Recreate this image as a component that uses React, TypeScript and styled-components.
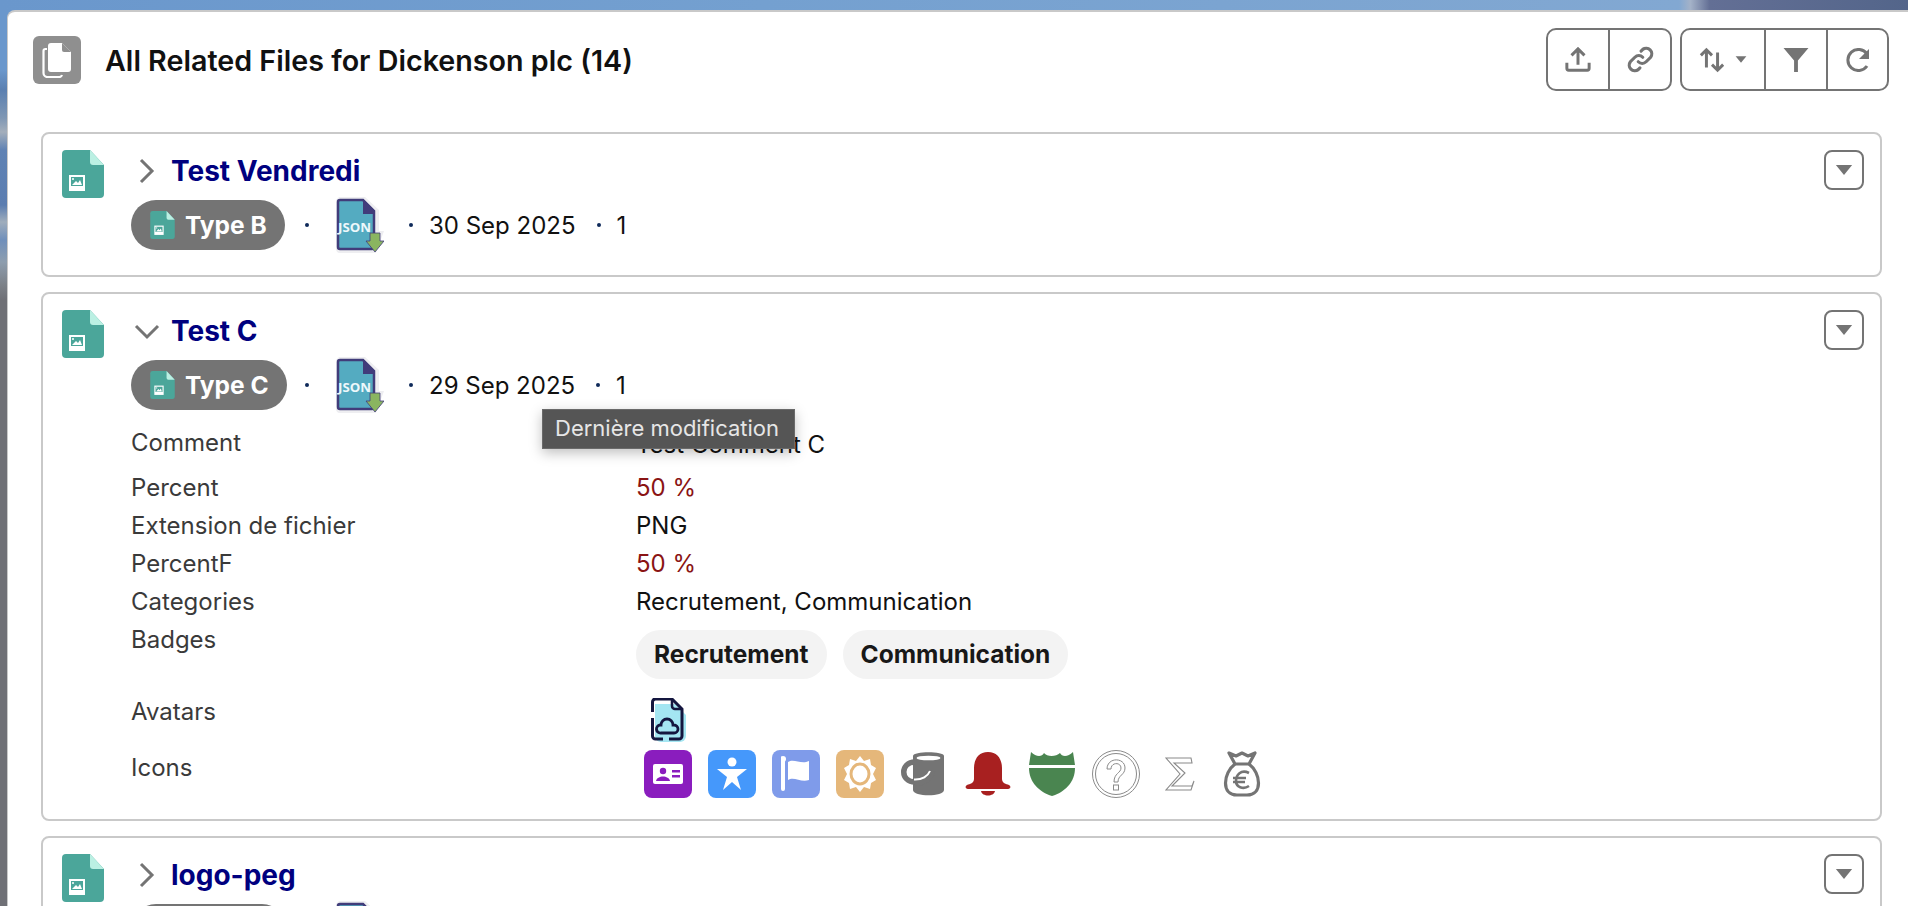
import React from "react";
import styled, { createGlobalStyle } from "styled-components";

const Global = createGlobalStyle`
  html, body { margin: 0; padding: 0; height: 100%; overflow: hidden; }
  body {
    font-family: Inter, "Liberation Sans", sans-serif;
    background:
      linear-gradient(90deg, #6a97cc 0%, #74a0d0 40%, #82a8d2 88%, #a4b2c8 88.6%, #636f95 89.6%, #53658a 100%) top / 100% 12px no-repeat,
      linear-gradient(180deg, #6a97cc 0, #6a97cc 70px, #5a7fb0 90px, #7f97b4 118px, #a3aebb 132px, #5f82b4 150px, #5b7db0 205px, #9fadbc 222px, #6f8fbb 240px, #8d9dae 262px, #7c8188 285px, #6f7076 300px, #6f7076 906px);
  }
`;

const Page = styled.div`
  height: 906px;
  padding: 10px 0 0 7px;
  box-sizing: border-box;
  overflow: hidden;
`;

const Panel = styled.main`
  height: 896px;
  box-sizing: border-box;
  background: #fff;
  border-top: 2px solid #c9c9c9;
  border-left: 1px solid #c9c9c9;
  border-top-left-radius: 8px;
  padding: 16px 19px 0 25px;
  overflow: hidden;
`;

const Header = styled.header`
  display: flex;
  align-items: center;
  justify-content: space-between;
  height: 63px;
  margin-bottom: 41px;
`;

const TitleWrap = styled.div`
  display: flex;
  align-items: center;
  gap: 24px;
`;

const HeaderIcon = styled.div`
  width: 48px;
  height: 48px;
  border-radius: 6px;
  background: #8f8f8f;
  display: flex;
  align-items: center;
  justify-content: center;
`;

const PageTitle = styled.h1`
  margin: 2px 0 0;
  font-size: 28.7px;
  font-weight: 600;
  color: #111;
  white-space: nowrap;
`;

const Toolbar = styled.div`
  display: flex;
  gap: 8px;
`;

const BtnGroup = styled.div`
  display: flex;
  height: 63px;
  box-sizing: border-box;
  border: 2px solid #747474;
  border-radius: 10px;
  background: #fff;
`;

const ToolBtn = styled.div<{ $w: number }>`
  width: ${(p) => p.$w}px;
  box-sizing: border-box;
  display: flex;
  align-items: center;
  justify-content: center;
  gap: 10px;
  & + & { border-left: 2px solid #747474; }
`;

const Card = styled.section`
  box-sizing: border-box;
  position: relative;
  width: 1841px;
  margin-left: 8px;
  border: 2px solid #c9c9c9;
  border-radius: 8px;
  padding: 16px 16px 22px 19px;
  margin-bottom: 15px;
  display: flex;
  gap: 27px;
`;

const CardBody = styled.div`
  flex: 1;
  min-width: 0;
`;

const TitleRow = styled.div`
  display: flex;
  align-items: center;
  height: 41px;
  padding-bottom: 6px;
  gap: 17px;
  padding-left: 9px;
`;

const CardTitle = styled.h2`
  margin: 0;
  font-size: 28px;
  font-weight: 700;
  color: #00007f;
  white-space: nowrap;
`;

const MenuBtn = styled.div`
  width: 40px;
  height: 40px;
  box-sizing: border-box;
  border: 2px solid #747474;
  border-radius: 8px;
  display: flex;
  align-items: center;
  justify-content: center;
`;

const MetaRow = styled.div`
  display: flex;
  align-items: center;
  height: 56px;
  font-size: 24px;
  color: #111;
`;

const PillSlot = styled.div`
  width: 155px;
  flex: none;
`;

const Pill = styled.div`
  display: inline-flex;
  height: 50px;
  box-sizing: border-box;
  border-radius: 25px;
  background: #747474;
  color: #fff;
  font-weight: 700;
  font-size: 24.5px;
  align-items: center;
  gap: 10px;
  padding: 0 18px 0 19px;
  white-space: nowrap;
  vertical-align: top;
`;

const Dot = styled.span<{ $ml: number; $mr: number }>`
  width: 4px;
  height: 4px;
  border-radius: 50%;
  background: #0f2a5a;
  margin: 0 ${(p) => p.$mr}px 0 ${(p) => p.$ml}px;
  flex: none;
`;

const Details = styled.div`
  margin: 14px 0 -1px;
  display: grid;
  grid-template-columns: 505px 1fr;
  font-size: 24px;
`;

const Label = styled.div<{ $h?: number }>`
  color: #3a3a3a;
  height: ${(p) => p.$h ?? 38}px;
  line-height: 32px;
`;

const Value = styled.div<{ $red?: boolean; $pt?: number }>`
  color: ${(p) => (p.$red ? "#8a1414" : "#111")};
  padding-top: ${(p) => p.$pt ?? 0}px;
  line-height: 32px;
`;

const Badges = styled.div`
  display: flex;
  gap: 16px;
  padding-top: 6px;
`;

const Badge = styled.span`
  height: 49px;
  border-radius: 25px;
  background: #f3f3f3;
  color: #181818;
  font-weight: 700;
  font-size: 24.5px;
  line-height: 49px;
  padding: 0 18px;
  white-space: nowrap;
`;

const IconRow = styled.div`
  display: flex;
  gap: 16px;
  margin: -2px 0 0 8px;
`;

const IconCell = styled.div<{ $bg?: string; $start?: boolean }>`
  width: 48px;
  height: 48px;
  border-radius: 8px;
  background: ${(p) => p.$bg ?? "transparent"};
  display: flex;
  align-items: center;
  justify-content: ${(p) => (p.$start ? "flex-start" : "center")};
  padding-left: ${(p) => (p.$start ? "3px" : "0")};
  box-sizing: border-box;
`;

const AvatarCell = styled.div`
  margin-left: 15px;
  padding-top: 2px;
  height: 43px;
`;

const Tooltip = styled.div`
  position: absolute;
  left: 499px;
  top: 115px;
  width: 253px;
  height: 40px;
  box-sizing: border-box;
  background: #555;
  border: 1px solid #6a6a6a;
  color: #e6e6e6;
  font-size: 22px;
  line-height: 37px;
  padding-left: 12px;
  white-space: nowrap;
  box-shadow: 0 4px 12px rgba(0,0,0,.25);
`;

const ChevronSvg = styled.svg`
  flex: none;
  margin: 0 -6px;
`;

const Chevron = ({ open }: { open?: boolean }) => (
  <ChevronSvg width="26" height="26" viewBox="0 0 26 26" fill="none" stroke="#747474" strokeWidth="3">
    {open ? <path d="M2 8 L13 19 L24 8" /> : <path d="M7 2 L18 13 L7 24" />}
  </ChevronSvg>
);

const FileImg = ({ w = 42, h = 48 }: { w?: number; h?: number }) => (
  <svg width={w} height={h} viewBox="0 0 42 48" style={{ flex: "none" }}>
    <path d="M4 0 H28 L42 15 V44 a4 4 0 0 1 -4 4 H4 a4 4 0 0 1 -4 -4 V4 a4 4 0 0 1 4 -4 Z" fill="#4ba69a" />
    <path d="M28 0 L42 15 H31 a3 3 0 0 1 -3 -3 Z" fill="#bbf0e3" />
    <rect x="7" y="25" width="16" height="16" fill="#fff" />
    <rect x="9" y="27" width="12" height="9" fill="#4ba69a" />
    <path d="M10 35 L14 31 L16 33 L18 30 L20 35 Z" fill="#fff" />
    <circle cx="11" cy="29" r="1" fill="#fff" />
  </svg>
);

const JsonIcon = () => (
  <svg width="48" height="56" viewBox="0 0 48 56" style={{ flex: "none" }}>
    <path d="M3 0 H29 L43 13 V34 H48 L40 56 H5 a4 4 0 0 1 -5 -4 V3 Z" fill="#eeeef1" />
    <path d="M2 50 V5 a2 2 0 0 1 2 -2 H27 L38 14 V50 a2 2 0 0 1 -2 2 H4 a2 2 0 0 1 -2 -2 Z" fill="#54abc1" stroke="#413c7a" strokeWidth="2.5" />
    <path d="M27 3 L38 14 V17 H27 Z" fill="#413c7a" />
    <text x="18.5" y="35" textAnchor="middle" fontFamily="'Open Sans', Inter, sans-serif" fontSize="13" fontWeight="700" fill="#eef8fb" textLength="33" lengthAdjust="spacingAndGlyphs">JSON</text>
    <path d="M34 36 H44 V44 H48 L39 55 L30 44 H34 Z" fill="#8ab560" stroke="#413c7a" strokeWidth="0.8" />
  </svg>
);

const Caret = ({ w = 20, h = 11 }: { w?: number; h?: number }) => (
  <svg width={w} height={h} viewBox="0 0 20 11"><path d="M1 0 H19 L10 11 Z" fill="#747474" /></svg>
);

const MetaLine = ({ type, date }: { type: string; date: string }) => (
  <MetaRow>
    <PillSlot><Pill><FileImg w={25} h={28} />{type}</Pill></PillSlot>
    <Dot $ml={19} $mr={27} />
    <JsonIcon />
    <Dot $ml={25} $mr={16} />
    <span>{date}</span>
    <Dot $ml={21} $mr={16} />
    <span>1</span>
  </MetaRow>
);

const CardShell = ({ title, open, children }: { title: string; open?: boolean; children: React.ReactNode }) => (
  <Card>
    <FileImg />
    <CardBody>
      <TitleRow>
        <Chevron open={open} />
        <CardTitle>{title}</CardTitle>
      </TitleRow>
      {children}
    </CardBody>
    <MenuBtn><Caret w={18} h={10} /></MenuBtn>
  </Card>
);

export default function App() {
  return (
    <Page>
      <Global />
      <Panel>
        <Header>
          <TitleWrap>
            <HeaderIcon>
              <svg width="30" height="36" viewBox="0 0 30 36" fill="none">
                <path d="M5 7 H3.5 a2 2 0 0 0 -2 2 V31 a4 4 0 0 0 4 4 H17 a3 3 0 0 0 3 -2" stroke="#fff" strokeWidth="2.2" />
                <path d="M9 1 H20 L29 10 V27 a3 3 0 0 1 -3 3 H9 a3 3 0 0 1 -3 -3 V4 a3 3 0 0 1 3 -3 Z" fill="#fff" />
                <path d="M20 1 V8 a2 2 0 0 0 2 2 H29 Z" fill="#8f8f8f" />
              </svg>
            </HeaderIcon>
            <PageTitle>All Related Files for Dickenson plc (14)</PageTitle>
          </TitleWrap>
          <Toolbar>
            <BtnGroup>
              <ToolBtn $w={60}>
                <svg width="26" height="26" viewBox="0 0 28 28" fill="none" stroke="#747474" strokeWidth="3.2">
                  <path d="M2 17 V23 a2 2 0 0 0 2 2 H24 a2 2 0 0 0 2 -2 V17" />
                  <path d="M14 19 V3 M7 9 L14 2 L21 9" />
                </svg>
              </ToolBtn>
              <ToolBtn $w={62}>
                <svg width="27" height="27" viewBox="0 0 24 24" fill="none" stroke="#747474" strokeWidth="2.8" strokeLinecap="round">
                  <path d="M10 14 a5 5 0 0 0 7 0 l4 -4 a5 5 0 0 0 -7 -7 l-1.5 1.5" />
                  <path d="M14 10 a5 5 0 0 0 -7 0 l-4 4 a5 5 0 0 0 7 7 l1.5 -1.5" />
                </svg>
              </ToolBtn>
            </BtnGroup>
            <BtnGroup>
              <ToolBtn $w={82}>
                <svg width="26" height="26" viewBox="0 0 28 26" fill="none" stroke="#747474" strokeWidth="3.2">
                  <path d="M8 21 V2 M2 8 L8 2 L14 8" />
                  <path d="M20 5 V24 M14 18 L20 24 L26 18" />
                </svg>
                <Caret w={12} h={7} />
              </ToolBtn>
              <ToolBtn $w={62}>
                <svg width="26" height="24" viewBox="0 0 26 25"><path d="M0 0 H26 L15 13 V25 H11 V13 Z" fill="#747474" /></svg>
              </ToolBtn>
              <ToolBtn $w={61}>
                <svg width="24" height="24" viewBox="0 0 24 24" fill="none" stroke="#747474" strokeWidth="3">
                  <path d="M21 6 A10.5 10.5 0 1 0 21 18" />
                  <path d="M23 1 V11 H13 Z" fill="#747474" stroke="none" />
                </svg>
              </ToolBtn>
            </BtnGroup>
          </Toolbar>
        </Header>

        <CardShell title="Test Vendredi">
          <MetaLine type="Type B" date="30 Sep 2025" />
        </CardShell>

        <CardShell title="Test C" open>
          <MetaLine type="Type C" date="29 Sep 2025" />
          <Details>
            <Label $h={45}>Comment</Label><Value $pt={2}>Test Comment C</Value>
            <Label>Percent</Label><Value $red>50 %</Value>
            <Label>Extension de fichier</Label><Value>PNG</Value>
            <Label>PercentF</Label><Value $red>50 %</Value>
            <Label>Categories</Label><Value>Recrutement, Communication</Value>
            <Label $h={72}>Badges</Label>
            <Badges><Badge>Recrutement</Badge><Badge>Communication</Badge></Badges>
            <Label $h={56}>Avatars</Label>
            <AvatarCell>
              <svg width="36" height="44" viewBox="0 0 36 44" fill="none">
                <path d="M4 6 H24 L35 17 V38 a6 6 0 0 1 -6 6 H10 a6 6 0 0 1 -6 -6 Z" fill="#a4e6f2" />
                <path d="M1.5 14 V4 a3 3 0 0 1 3 -3 H21 L31 11 V38 a3 3 0 0 1 -3 3 H18 M12 41 H4.5 a3 3 0 0 1 -3 -3 V20" stroke="#14163f" strokeWidth="3" />
                <path d="M21 1 V8 a3 3 0 0 0 3 3 H31" stroke="#14163f" strokeWidth="2.5" />
                <path d="M10 35 a4 4 0 0 1 -1 -8 H10 a6 6 0 0 1 12 0 H23 a4 4 0 0 1 0 8 Z" stroke="#14163f" strokeWidth="2.8" />
              </svg>
            </AvatarCell>
            <Label $h={46}>Icons</Label>
            <IconRow>
              <IconCell $bg="#8a1dbe">
                <svg width="30" height="20" viewBox="0 0 30 20">
                  <rect width="30" height="20" rx="2" fill="#fff" />
                  <circle cx="10" cy="7" r="3.2" fill="#8a1dbe" />
                  <path d="M3 17 C4 11 16 11 17 17 Z" fill="#8a1dbe" />
                  <rect x="19" y="6" width="8" height="2.5" fill="#8a1dbe" /><rect x="19" y="11" width="8" height="2.5" fill="#8a1dbe" />
                </svg>
              </IconCell>
              <IconCell $bg="#4598fb">
                <svg width="30" height="34" viewBox="0 0 30 34" fill="#fff">
                  <circle cx="15" cy="5" r="4.5" />
                  <path d="M0 12 L30 12 L20 20 L24 33 L15 25 L6 33 L10 20 Z" />
                </svg>
              </IconCell>
              <IconCell $bg="#7f9bea">
                <svg width="30" height="36" viewBox="0 0 30 36" fill="#fff">
                  <rect x="0" y="1" width="4" height="34" rx="2" /><circle cx="2" cy="3" r="3" />
                  <path d="M7 6 C13 2 20 9 28 5 V24 C20 27 13 20 7 24 Z" />
                </svg>
              </IconCell>
              <IconCell $bg="#e5b77a">
                <svg width="32" height="36" viewBox="0 0 32 36">
                  <path d="M16 0 L20 5 L26 3 L27 9 L32 12 L29 18 L32 24 L27 27 L26 33 L20 31 L16 36 L12 31 L6 33 L5 27 L0 24 L3 18 L0 12 L5 9 L6 3 L12 5 Z" fill="#fff" />
                  <ellipse cx="16" cy="18" rx="9" ry="10" fill="none" stroke="#e5b77a" strokeWidth="3" />
                </svg>
              </IconCell>
              <IconCell>
                <svg width="46" height="44" viewBox="0 0 46 44" fill="none">
                  <path d="M12 4 C12 -1 43 -1 43 4 V38 C43 45 12 45 12 38 Z" fill="#747474" />
                  <ellipse cx="27.5" cy="6" rx="12" ry="2.3" fill="#fff" />
                  <path d="M14 10 C-1 10 -1 30 14 30" stroke="#747474" strokeWidth="5.5" />
                  <path d="M14 31 C22 32 30 27 32 19" stroke="#747474" strokeWidth="5" />
                  <path d="M13 27.5 C21 28 27 24 29 19" stroke="#fff" strokeWidth="2" />
                </svg>
              </IconCell>
              <IconCell>
                <svg width="46" height="44" viewBox="0 0 46 44" fill="#a82020">
                  <path d="M23 0 C33 0 37 8 37 16 V27 C37 31 41 32 44 33 C46 34 46 37 43 37 H3 C0 37 0 34 2 33 C5 32 9 31 9 27 V16 C9 8 13 0 23 0 Z" />
                  <path d="M16 39 H30 C29 45 17 45 16 39 Z" />
                </svg>
              </IconCell>
              <IconCell>
                <svg width="46" height="44" viewBox="0 0 46 44" fill="#4a8550">
                  <path d="M2 0 C7 5 13 5 15 1 C18 5 27 5 31 1 C33 5 39 5 44 0 L46 13 H0 Z" />
                  <path d="M0 16 H46 C46 30 36 40 23 44 C10 40 0 30 0 16 Z" />
                </svg>
              </IconCell>
              <IconCell>
                <svg width="48" height="48" viewBox="0 0 48 48" fill="none" stroke="#8a8a8a" strokeWidth="1">
                  <circle cx="24" cy="24" r="23.5" /><circle cx="24" cy="24" r="20.5" />
                  <path d="M15 19 C15 7 33 7 33 18 C33 25 26 25 26 32 H22 C22 23 29 23 29 18 C29 12 19 12 19 19 Z" />
                  <rect x="21.5" y="35" width="5" height="5" />
                </svg>
              </IconCell>
              <IconCell>
                <svg width="30" height="34" viewBox="0 0 30 34" fill="none" stroke="#8a8a8a" strokeWidth="1.1">
                  <path d="M1 1 H26 L27 6 H9 L20 16 L7 29 H27 L29 24 L26 33 H1 L15 17 Z" />
                </svg>
              </IconCell>
              <IconCell $start>
                <svg width="38" height="46" viewBox="0 0 38 46" fill="none" stroke="#747474" strokeWidth="3.2">
                  <path d="M12 13 L6 2 L13 5 L19 2 L25 5 L32 2 L26 13 Z" strokeLinejoin="round" />
                  <path d="M12 13 C0 22 -2 44 14 44 H24 C40 44 38 22 26 13" />
                  <path d="M26 22 C18 18 13 24 13 30 C13 36 20 39 26 35 M10 27 H23 M10 31 H22" strokeWidth="2.6" />
                </svg>
              </IconCell>
            </IconRow>
          </Details>
          <Tooltip>Dernière modification</Tooltip>
        </CardShell>

        <CardShell title="logo-peg">
          <MetaLine type="Type A" date="26 Sep 2025" />
        </CardShell>
      </Panel>
    </Page>
  );
}
